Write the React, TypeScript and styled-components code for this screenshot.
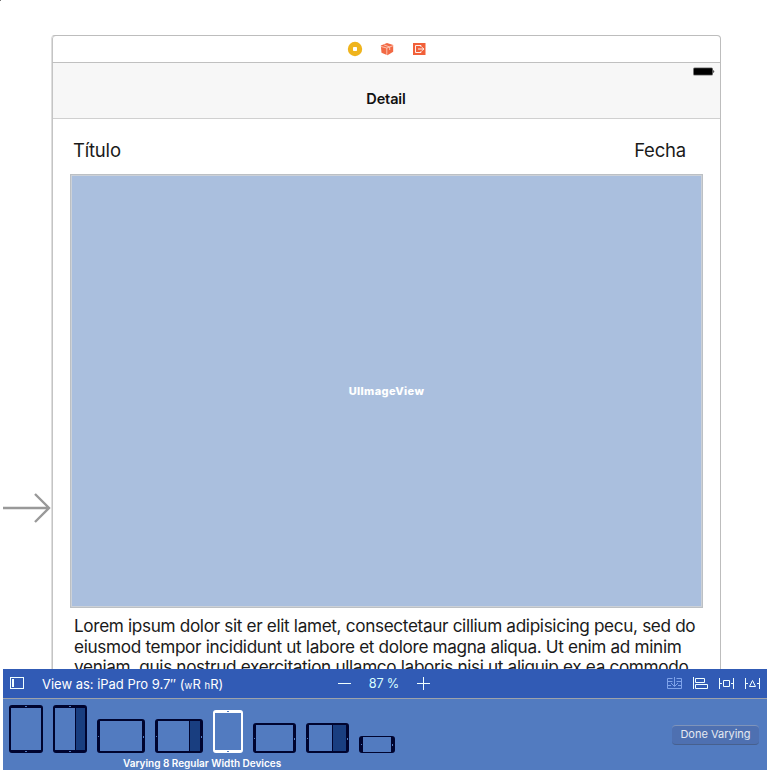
import React from 'react';
import styled, { createGlobalStyle } from 'styled-components';

const GlobalStyle = createGlobalStyle`
  * { box-sizing: border-box; }
  body { margin: 0; background: #fff; overflow: hidden; }
`;

const Editor = styled.main`
  position: relative;
  width: 767px;
  height: 770px;
  display: flex;
  flex-direction: column;
  background: #fff;
  overflow: hidden;
  font-family: Inter, 'Liberation Sans', sans-serif;
  white-space: nowrap;
`;

const CanvasMark = styled.span`
  position: absolute;
  left: 0;
  top: 0;
  width: 1px;
  height: 1px;
  background: #777;
`;

const Canvas = styled.section`
  height: 669px;
  flex: none;
  display: flex;
  align-items: flex-start;
  overflow: hidden;
`;

const EntryArrow = styled.svg`
  flex: none;
  width: 51px;
  height: 34px;
  margin-top: 491px;
`;

const Scene = styled.div`
  width: 670px;
  height: 700px;
  flex: none;
  margin-top: 35px;
  border: 1px solid #bdbdbd;
  border-left-color: #dedede;
  box-shadow: inset 1px 0 #c4c4c4;
  border-radius: 4px 4px 0 0;
`;

const SceneDock = styled.header`
  height: 27px;
  padding-left: 295px;
  display: flex;
  align-items: center;
  gap: 16px;
  border-bottom: 1px solid #c0c0c0;
`;

const DockIcon = styled.svg`
  width: 16px;
  height: 16px;
  flex: none;
`;

const NavigationBar = styled.div`
  height: 56px;
  margin-left: 1px;
  background: #f7f7f7;
  border-bottom: 1px solid #d0d0d0;
`;

const StatusBar = styled.div`
  height: 17px;
  padding: 4px 5px 0 0;
  display: flex;
  justify-content: flex-end;
`;

const Battery = styled.svg`
  width: 22px;
  height: 9px;
`;

const NavTitle = styled.h1`
  margin: 9px 1px 0 0;
  text-align: center;
  font-size: 14.5px;
  line-height: 20px;
  font-weight: 600;
  letter-spacing: -0.15px;
  color: #111;
`;

const Labels = styled.div`
  height: 55px;
  padding: 18px 34px 0 21px;
  display: flex;
  justify-content: space-between;
  color: #1a1a1a;
  font-size: 18.5px;
  line-height: 26px;
  letter-spacing: -0.2px;
`;

const ImageView = styled.div`
  width: 633px;
  height: 434px;
  margin-left: 18px;
  display: grid;
  place-items: center;
  border: 1px solid #bcc0c4;
  box-shadow: inset 0 0 0 1px #ccd1d8;
  background: #aabfde;
  color: #fff;
  font-size: 11px;
  font-weight: 800;
  letter-spacing: 0.38px;
`;

const Body = styled.div`
  margin: 8px 0 0 22px;
  color: #1a1a1a;
  font-size: 17.2px;
  line-height: 20.7px;
`;

const Line = styled.div<{ $track: number }>`
  letter-spacing: ${({ $track }) => $track}px;
`;

const Panel = styled.footer`
  height: 101px;
  flex: none;
  margin-left: 3px;
  display: flex;
  flex-direction: column;
  background: #527bc0;
  color: #fff;
`;

const Toolbar = styled.div`
  height: 30px;
  flex: none;
  display: flex;
  align-items: center;
  background: #315bb5;
  border-bottom: 1px solid #9da2aa;
`;

const Tool = styled.svg<{ $w: number; $left?: number; $disabled?: boolean }>`
  width: ${({ $w }) => $w}px;
  height: 14px;
  flex: none;
  margin: 0 0 1px ${({ $left = 0 }) => $left}px;
  fill: none;
  stroke: ${({ $disabled }) => ($disabled ? '#7fa3ea' : '#f0ffff')};
  stroke-width: 1;
`;

const ConstraintTools = styled.div`
  margin: 0 7px 0 auto;
  display: flex;
  gap: 11px;
`;

const ViewAs = styled.span`
  width: 282px;
  margin-left: 18px;
  font-size: 13px;
  letter-spacing: -0.02px;
`;

const SizeClass = styled.small`
  font-size: 9.5px;
  letter-spacing: 0.2px;
`;

const Zoom = styled.span`
  width: 66px;
  text-align: center;
  font-size: 12.7px;
  letter-spacing: -0.2px;
  color: #d9ffff;
`;

const Tray = styled.div`
  height: 54px;
  flex: none;
  padding: 0 8px 0 6px;
  display: flex;
  align-items: flex-end;
  gap: 10px;
`;

const Device = styled.div<{ $w: number; $h: number; $edge: string; $selected?: boolean }>`
  position: relative;
  flex: none;
  width: ${({ $w }) => $w}px;
  height: ${({ $h }) => $h}px;
  border: solid ${({ $selected }) => ($selected ? '#fff' : '#00042f')};
  border-width: ${({ $edge }) => $edge};
  border-radius: 3px;
  display: flex;
  justify-content: flex-end;

  &::before, &::after {
    content: '';
    position: absolute;
    background: #527bc0;
    width: ${({ $w, $h }) => ($w > $h ? 1 : 2)}px;
    height: 1px;
    ${({ $w, $h }) => ($w > $h ? 'left: -2px; top: calc(50% - 0.5px);' : 'top: -2px; left: calc(50% - 1px);')}
  }
  &::after {
    ${({ $w, $h }) => ($w > $h ? 'left: auto; right: -2px; height: 2px;' : 'top: auto; bottom: -2px;')}
  }
`;

const SplitPane = styled.div<{ $w: number }>`
  width: ${({ $w }) => $w}px;
  background: #193e80;
  border-left: 1px solid #00042f;
`;

const DoneButton = styled.button`
  width: 87px;
  height: 20px;
  margin: 0 0 8px auto;
  padding: 0 0 2px;
  border: solid #7f94ba;
  border-width: 1px 0;
  border-bottom-color: #47608e;
  border-radius: 4px;
  background: #4e70b1;
  color: #e5e9f2;
  font: 11px Inter, sans-serif;
`;

const Caption = styled.div`
  height: 17px;
  padding: 3px 0 0 120px;
  font-size: 10px;
  line-height: 15px;
  font-weight: 600;
  letter-spacing: -0.01px;
`;

const devices = [
  { w: 34, h: 48, edge: '3px 2px' },
  { w: 34, h: 48, edge: '3px 2px', split: 10 },
  { w: 48, h: 34, edge: '2px 3px' },
  { w: 48, h: 34, edge: '2px 3px', split: 11 },
  { w: 30, h: 43, edge: '3px 2px', selected: true },
  { w: 43, h: 30, edge: '2px 3px' },
  { w: 43, h: 30, edge: '2px 3px', split: 14 },
  { w: 36, h: 17, edge: '1px 4px' },
];

const bodyLines = [
  { text: 'Lorem ipsum dolor sit er elit lamet, consectetaur cillium adipisicing pecu, sed do', track: -0.35 },
  { text: 'eiusmod tempor incididunt ut labore et dolore magna aliqua. Ut enim ad minim', track: -0.34 },
  { text: 'veniam, quis nostrud exercitation ullamco laboris nisi ut aliquip ex ea commodo', track: -0.35 },
];

export default function App() {
  return (
    <Editor>
      <GlobalStyle />
      <CanvasMark />
      <Canvas>
        <EntryArrow viewBox="0 0 51 34" fill="none" stroke="#999" strokeWidth="2.4">
          <path d="M3 17H49M35 3L49 17L35 31" />
        </EntryArrow>
        <Scene>
          <SceneDock>
            <DockIcon viewBox="0 0 16 16">
              <circle cx="8" cy="8" r="7.2" fill="#efb41d" />
              <rect x="6" y="6" width="4" height="4" rx=".7" fill="#fff" />
            </DockIcon>
            <DockIcon viewBox="0 0 16 16">
              <path d="M1.8 4.5L8 2L14.2 4V10.7L8.5 14.2L2.5 11.7Z" fill="#f26944" />
              <path d="M2 5.5L7.8 7L14 4.7M7.8 7V14M4.8 3.8L10.7 6V9" fill="none" stroke="#ffd9cc" strokeWidth=".8" />
            </DockIcon>
            <DockIcon viewBox="0 0 16 16">
              <rect x="2" y="2" width="12.5" height="12" fill="#f16039" />
              <path d="M10 6V4.5H4.5V11.5H10V10M7 8H12.8M11 6.2L12.8 8L11 9.8" fill="none" stroke="#fff" strokeWidth=".9" />
            </DockIcon>
          </SceneDock>
          <NavigationBar>
            <StatusBar>
              <Battery viewBox="0 0 22 9">
                <rect x="0" y=".5" width="20" height="8" rx="1.5" fill="#777" />
                <rect x="1" y="1.2" width="18.2" height="6.6" rx=".5" fill="#000" />
                <path d="M20.2 3Q22.5 4.5 20.2 6Z" fill="#333" />
              </Battery>
            </StatusBar>
            <NavTitle>Detail</NavTitle>
          </NavigationBar>
          <Labels><span>Título</span><span>Fecha</span></Labels>
          <ImageView>UIImageView</ImageView>
          <Body>
            {bodyLines.map((l) => <Line key={l.text} $track={l.track}>{l.text}</Line>)}
          </Body>
        </Scene>
      </Canvas>
      <Panel>
        <Toolbar>
          <Tool $left={7} $w={14} viewBox="0 0 14 14">
            <rect x=".5" y="1.5" width="13" height="11" />
            <path d="M3 3V11" strokeWidth="2" />
          </Tool>
          <ViewAs>View as: iPad Pro 9.7″ (<SizeClass>w</SizeClass>R <SizeClass>h</SizeClass>R)</ViewAs>
          <Tool $left={14} $w={13} viewBox="0 0 13 14"><path d="M0 7.5H13" /></Tool>
          <Zoom>87 %</Zoom>
          <Tool $w={13} viewBox="0 0 13 14"><path d="M0 7.5H13M6.5 1V14" /></Tool>
          <ConstraintTools>
            <Tool $w={15} $disabled viewBox="0 0 15 14">
              <path d="M5.5 2.5H.5V12.5H14.5V2.5H9.5M.5 5.5H5.5M9.5 5.5H14.5M.5 9.5H4M11 9.5H14.5M7.5 1V10M4 7L7.5 10.5L11 7" />
            </Tool>
            <Tool $w={15} viewBox="0 0 15 14">
              <path d="M.5 1V13M2.5 2.5H11.5V6.5H2.5ZM2.5 8.5H14.5V12.5H2.5Z" />
            </Tool>
            <Tool $w={15} viewBox="0 0 15 14">
              <path d="M.5 2V13M14.5 2V13M.5 7.5H3M12 7.5H14.5M4.5 4.5H10.5V10.5H4.5Z" />
            </Tool>
            <Tool $w={15} viewBox="0 0 15 14">
              <path d="M.5 2V13M14.5 2V13M.5 7.5H3M12 7.5H14.5M7.5 4.5L4.5 10.5H10.5Z" />
            </Tool>
          </ConstraintTools>
        </Toolbar>
        <Tray>
          {devices.map((d, i) => (
            <Device key={i} $w={d.w} $h={d.h} $edge={d.edge} $selected={d.selected}>
              {d.split && <SplitPane $w={d.split} />}
            </Device>
          ))}
          <DoneButton>Done Varying</DoneButton>
        </Tray>
        <Caption>Varying 8 Regular Width Devices</Caption>
      </Panel>
    </Editor>
  );
}
